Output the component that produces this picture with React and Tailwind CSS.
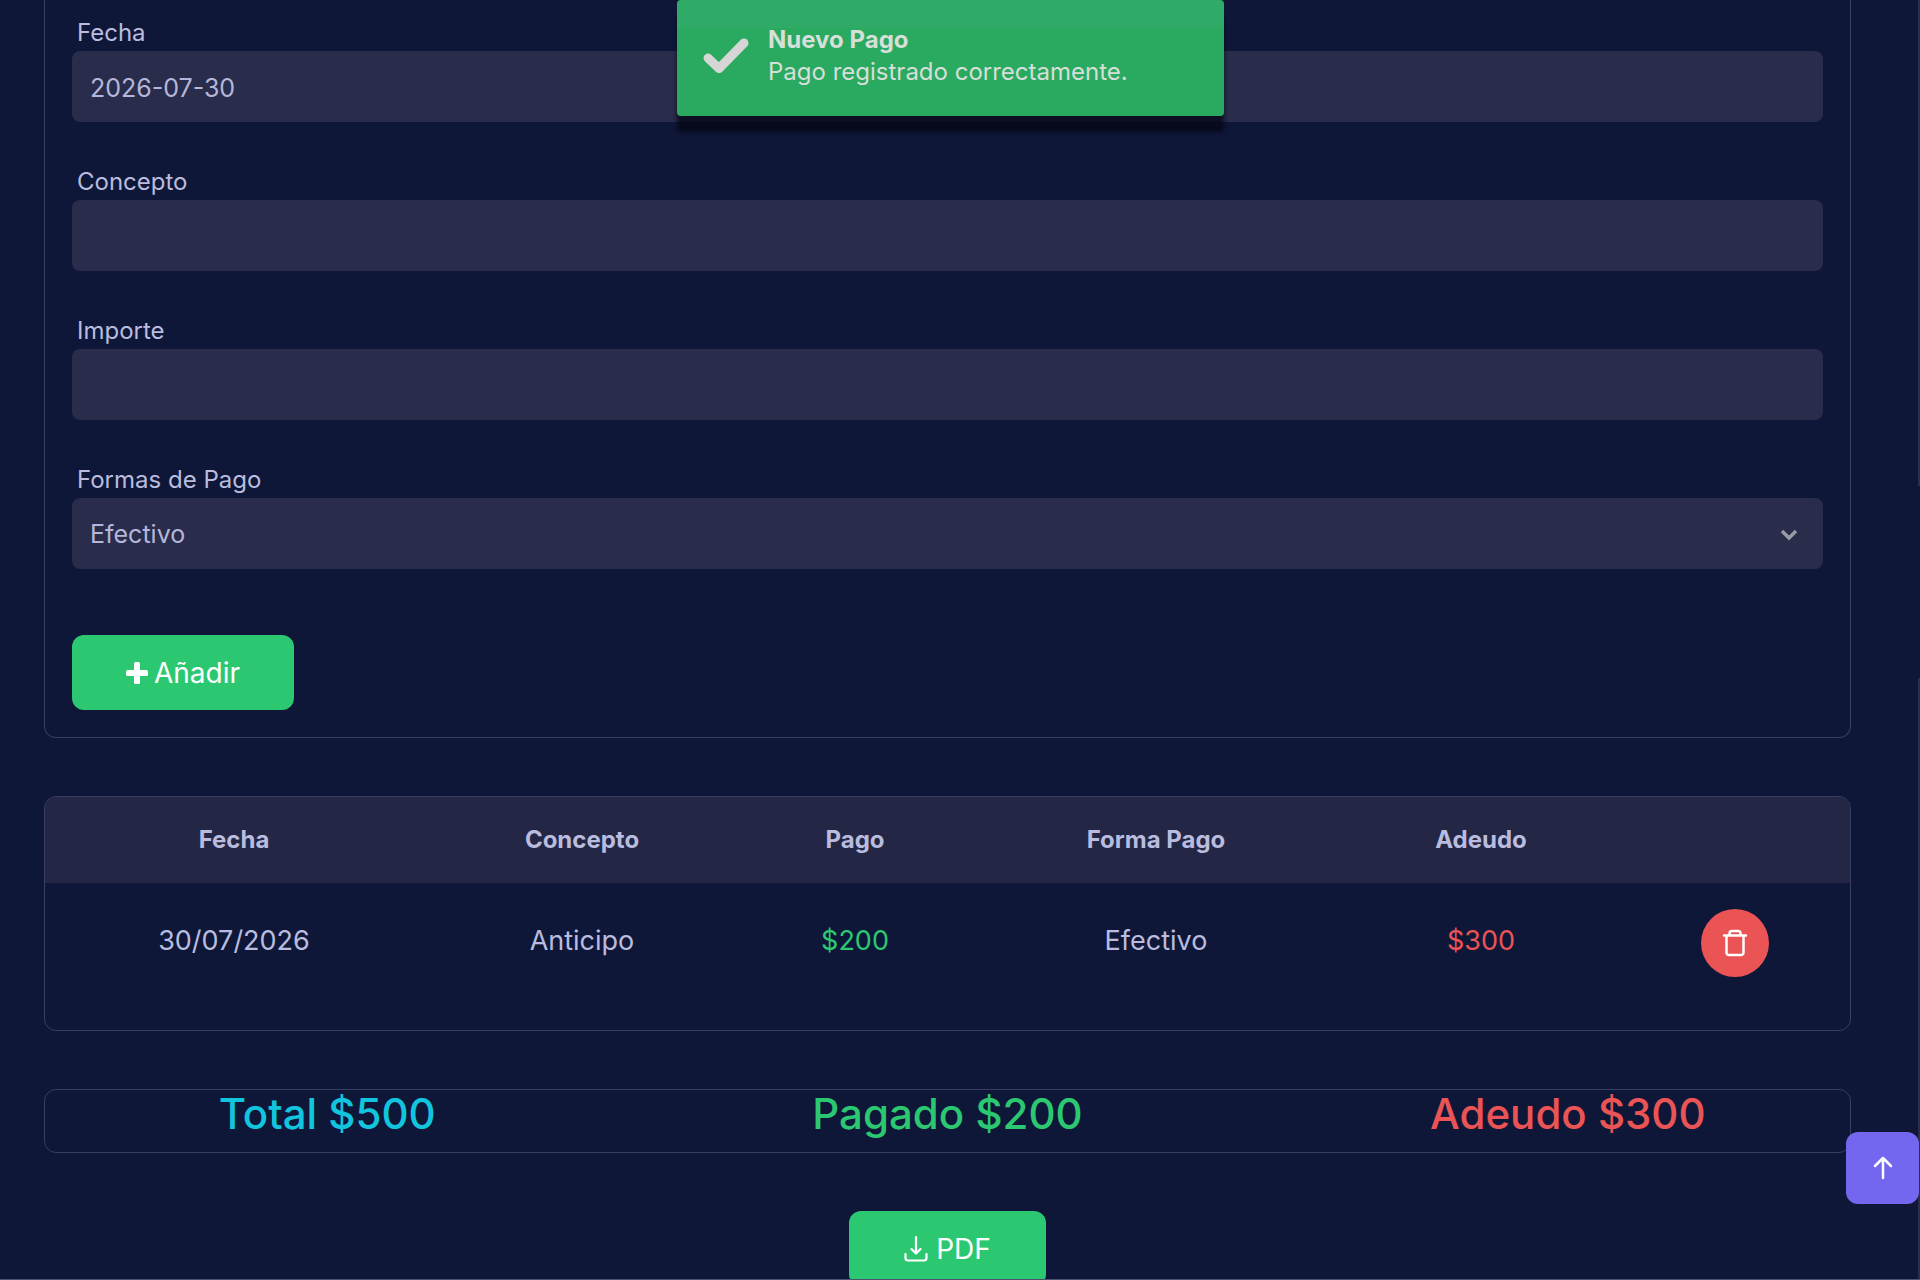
const pagos = [
  { fecha: '30/07/2026', concepto: 'Anticipo', pago: '$200', forma: 'Efectivo', adeudo: '$300' },
];

const fieldClass = 'block w-full h-[71px] rounded-lg bg-[#292c4a] px-[18px] pt-[2px] text-[25px] text-[#b4b7db] outline-none';

function Field({ id, label, children }) {
  return (
    <div className="mb-[41px]">
      <label htmlFor={id} className="block h-[37px] pl-[5px] text-[24px] leading-[38px]">{label}</label>
      {children}
    </div>
  );
}

function CheckIcon() {
  return (
    <svg className="w-[46px] h-[36px] shrink-0" viewBox="0 0 46 36" fill="none" stroke="#d6d6d6" strokeWidth="9" strokeLinecap="round" strokeLinejoin="round" aria-hidden="true">
      <path d="M5 20l11 10.500L41 5" />
    </svg>
  );
}

function PlusIcon() {
  return (
    <svg className="size-[22px]" viewBox="0 0 22 22" fill="currentColor" aria-hidden="true">
      <rect x="8" y="0" width="6" height="22" rx="1.500" />
      <rect x="0" y="8" width="22" height="6" rx="1.500" />
    </svg>
  );
}

function TrashIcon() {
  return (
    <svg className="size-7" viewBox="0 0 28 28" fill="none" stroke="currentColor" strokeWidth="2.5" strokeLinecap="round" strokeLinejoin="round" aria-hidden="true">
      <path d="M3 6.500h22M8.500 6v-1.500a2.500 2.500 0 0 1 2.500-2.500h6a2.500 2.500 0 0 1 2.500 2.500V6M5.500 6.500v17a2.500 2.500 0 0 0 2.500 2.500h12a2.500 2.500 0 0 0 2.500-2.500v-17" />
    </svg>
  );
}

function DownloadIcon() {
  return (
    <svg className="w-6 h-7" viewBox="0 0 24 28" fill="none" stroke="currentColor" strokeWidth="2.2" strokeLinecap="round" strokeLinejoin="round" aria-hidden="true">
      <path d="M12 2v16M7.500 14l4.500 4.500 4.500-4.500M1.500 19v4a2.500 2.500 0 0 0 2.500 2.500h16a2.500 2.500 0 0 0 2.500-2.500v-4" />
    </svg>
  );
}

function Toast() {
  return (
    <div role="status" className="absolute left-1/2 top-0 -ml-[283px] flex h-[116px] w-[547px] items-start rounded bg-[linear-gradient(#2fab67_28px,#2aaa60_28px)] pl-[26px] pt-6 text-[#d6dfd8] shadow-[0_16px_4px_0_rgba(5,8,22,0.8)]">
      <div className="pt-[14px]"><CheckIcon /></div>
      <div className="ml-[19px] text-[24px] leading-8">
        <p className="font-bold">Nuevo Pago</p>
        <p>Pago registrado correctamente.</p>
      </div>
    </div>
  );
}

export default function App() {
  return (
    <div className="relative h-screen overflow-hidden border-b border-[#4d5273] bg-[#0f1739] pl-11 pr-[69px] font-['Inter',sans-serif] text-[#b9bcde]">
      <form className="rounded-b-xl border border-t-0 border-[#3a3e60] px-[27px] pt-[14px] pb-[27px]" onSubmit={(e) => e.preventDefault()}>
        <Field id="fecha" label="Fecha">
          <input id="fecha" type="text" defaultValue="2026-07-30" className={fieldClass} />
        </Field>
        <Field id="concepto" label="Concepto">
          <input id="concepto" type="text" className={fieldClass} />
        </Field>
        <Field id="importe" label="Importe">
          <input id="importe" type="text" className={fieldClass} />
        </Field>
        <Field id="forma" label="Formas de Pago">
          <div className="relative">
            <select id="forma" className={`${fieldClass} appearance-none`}>
              <option>Efectivo</option>
            </select>
            <svg className="pointer-events-none absolute right-[25px] top-[31px] h-3 w-[18px]" viewBox="0 0 18 12" fill="none" stroke="#9a9aa4" strokeWidth="3.500" aria-hidden="true">
              <path d="M2 2l7 7 7-7" />
            </svg>
          </div>
        </Field>
        <button type="submit" className="mt-[66px] flex h-[75px] w-[222px] items-center justify-center gap-1.5 rounded-xl bg-[#2bc871] text-[28px] text-white">
          <PlusIcon />
          Añadir
        </button>
      </form>

      <section className="mt-[58px] h-[235px] overflow-hidden rounded-xl border border-[#3a3e60]">
        <table className="w-full table-fixed text-center">
          <colgroup>
            <col className="w-[378px]" />
            <col className="w-[318px]" />
            <col className="w-[228px]" />
            <col className="w-[374px]" />
            <col className="w-[276px]" />
            <col className="w-[231px]" />
          </colgroup>
          <thead className="bg-[#242645] text-[24px]">
            <tr className="h-[86px]">
              <th>Fecha</th>
              <th>Concepto</th>
              <th>Pago</th>
              <th>Forma Pago</th>
              <th>Adeudo</th>
              <th />
            </tr>
          </thead>
          <tbody className="text-[27px]">
            {pagos.map((p) => (
              <tr key={p.fecha} className="h-[120px]">
                <td className="pb-1">{p.fecha}</td>
                <td className="pb-1">{p.concepto}</td>
                <td className="pb-1 text-[#2bc871]">{p.pago}</td>
                <td className="pb-1">{p.forma}</td>
                <td className="pb-1 text-[#ea5455]">{p.adeudo}</td>
                <td>
                  <button type="button" aria-label="Eliminar" className="mx-auto flex size-[68px] items-center justify-center rounded-full bg-[#ea5455] text-white">
                    <TrashIcon />
                  </button>
                </td>
              </tr>
            ))}
          </tbody>
        </table>
      </section>

      <section className="mt-[58px] h-16 rounded-xl border border-[#3a3e60]">
        <div className="-mx-7 grid grid-cols-3 text-center text-[42px] font-medium leading-[48px]">
          <p className="text-[#12c5df]">Total $500</p>
          <p className="text-[#2bc871]">Pagado $200</p>
          <p className="text-[#ea5455]">Adeudo $300</p>
        </div>
      </section>

      <button type="button" className="mx-auto mt-[58px] flex h-[75px] w-[197px] items-center justify-center gap-2 rounded-xl bg-[#2bc871] text-[28px] text-white">
        <DownloadIcon />
        PDF
      </button>

      <Toast />

      <div className="absolute inset-y-0 right-0 flex w-0.5 flex-col justify-between">
        <div className="h-[38%] bg-[#292e4d]" />
        <div className="h-[47%] bg-[#292e4d]" />
      </div>

      <button type="button" aria-label="Volver arriba" className="absolute bottom-[75px] right-px flex h-[72px] w-[73px] items-center justify-center rounded-xl bg-[#7367f0] text-white">
        <svg className="size-6" viewBox="0 0 24 24" fill="none" stroke="currentColor" strokeWidth="2.5" strokeLinecap="round" strokeLinejoin="round" aria-hidden="true">
          <path d="M12 22V2M4 10l8-8 8 8" />
        </svg>
      </button>
    </div>
  );
}
